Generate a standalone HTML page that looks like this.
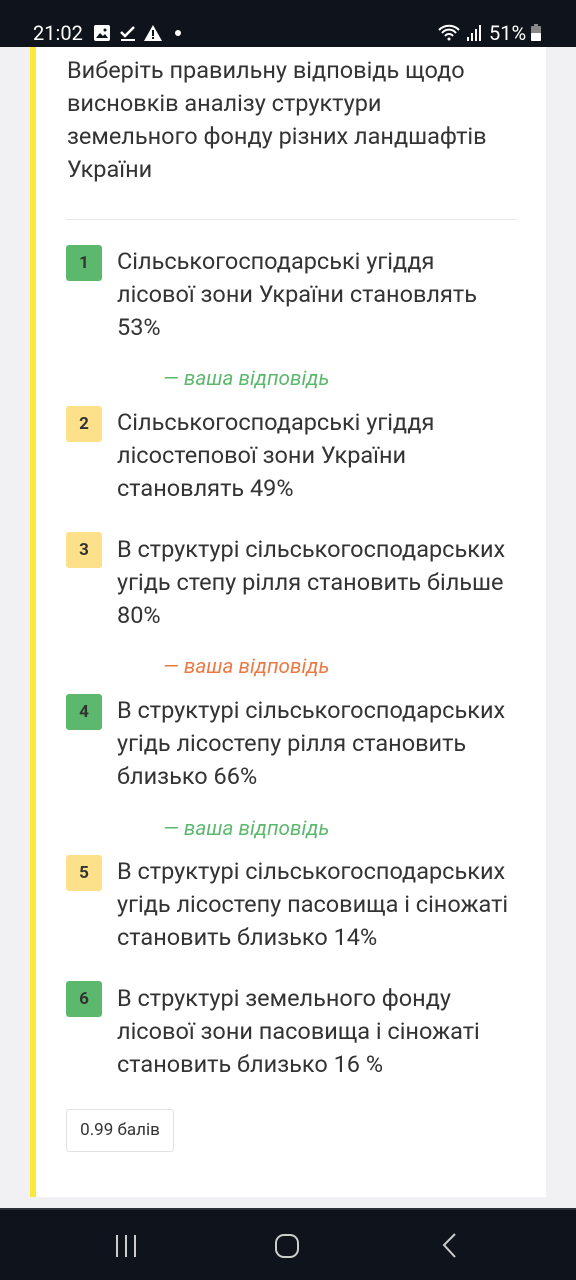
<!DOCTYPE html>
<html><head><meta charset="utf-8"><style>
*{margin:0;padding:0;box-sizing:border-box}
body{width:576px;height:1280px;background:#f1f1f3;font-family:"Roboto","Liberation Sans","DejaVu Sans",sans-serif;position:relative;overflow:hidden;color:#333}
.sb{position:absolute;left:0;top:0;width:576px;height:47px;background:#0f141c;color:#fff;font-size:20px}
.card{position:absolute;left:30px;top:47px;width:516px;height:1150px;background:#fff;border-left:6px solid #fbe83a}
.q{position:absolute;left:67px;top:54px;font-size:23.5px;line-height:33px;color:#333;white-space:nowrap}
.hr{position:absolute;left:66px;top:219px;width:451px;height:1px;background:#e8e8e8}
.b{position:absolute;left:66px;width:36px;height:36px;border-radius:3px;font-size:17px;font-weight:bold;color:#333;text-align:center;line-height:36px}
.g{background:#5cb86c}.y{background:#fde08a}
.t{position:absolute;left:117px;font-size:23.5px;line-height:33px;color:#333;white-space:nowrap}
.a{position:absolute;left:163px;font-size:20.7px;font-style:italic}
.nav{position:absolute;left:0;top:1208px;width:576px;height:72px;background:#0f141c;border-top:2px solid #2a2f36}
</style></head><body>
<div class="sb">
<span style="position:absolute;left:33px;top:21px">21:02</span>
<svg style="position:absolute;left:93px;top:24px" width="18" height="18" viewBox="0 0 18 18"><rect x="1" y="1" width="16" height="16" rx="2" fill="#fff"/><path d="M3 14l4-5 3 3 2-2 3 4z" fill="#0f141c"/><circle cx="12" cy="6" r="1.5" fill="#0f141c"/></svg>
<svg style="position:absolute;left:119px;top:24px" width="18" height="18" viewBox="0 0 18 18"><path d="M2 8l4 4 9-9" stroke="#fff" stroke-width="2.5" fill="none"/><rect x="2" y="15" width="14" height="2" fill="#fff"/></svg>
<svg style="position:absolute;left:143px;top:24px" width="20" height="18" viewBox="0 0 20 18"><path d="M10 1L19 17H1z" fill="#fff"/><rect x="9" y="6" width="2" height="6" fill="#0f141c"/><rect x="9" y="13" width="2" height="2" fill="#0f141c"/></svg>
<span style="position:absolute;left:175px;top:30px;width:6px;height:6px;border-radius:3px;background:#fff"></span>
<svg style="position:absolute;left:437px;top:23px" width="48" height="20" viewBox="0 0 48 20"><path d="M2 7a14 14 0 0 1 20 0M5 10a9 9 0 0 1 14 0M8 13a5 5 0 0 1 8 0" stroke="#fff" stroke-width="2" fill="none"/><circle cx="12" cy="16" r="1.5" fill="#fff"/><rect x="30" y="14" width="2" height="4" fill="#fff"/><rect x="34" y="10" width="2" height="8" fill="#fff"/><rect x="38" y="6" width="2" height="12" fill="#fff"/><rect x="42" y="2" width="2" height="16" fill="#fff"/></svg>
<span style="position:absolute;left:489px;top:21px">51%</span>
<svg style="position:absolute;left:530px;top:24px" width="12" height="18" viewBox="0 0 12 18"><rect x="4" y="0" width="4" height="2" fill="#888"/><rect x="1" y="2" width="10" height="15" rx="1" fill="#888"/><rect x="1" y="9" width="10" height="8" rx="1" fill="#fff"/></svg>
</div>
<div class="card"></div>
<div class="q">Виберіть правильну відповідь щодо<br>висновків аналізу структури<br>земельного фонду різних ландшафтів<br>України</div>
<div class="hr"></div>

<div class="b g" style="top:245px">1</div>
<div class="t" style="top:245px">Сільськогосподарські угіддя<br>лісової зони України становлять<br>53%</div>
<div class="a" style="top:367px;color:#5cb86c">— ваша відповідь</div>

<div class="b y" style="top:406px">2</div>
<div class="t" style="top:406px">Сільськогосподарські угіддя<br>лісостепової зони України<br>становлять 49%</div>

<div class="b y" style="top:532px">3</div>
<div class="t" style="top:533px">В структурі сільськогосподарських<br>угідь степу рілля становить більше<br>80%</div>
<div class="a" style="top:655px;color:#ea7a45">— ваша відповідь</div>

<div class="b g" style="top:694px">4</div>
<div class="t" style="top:694px">В структурі сільськогосподарських<br>угідь лісостепу рілля становить<br>близько 66%</div>
<div class="a" style="top:817px;color:#5cb86c">— ваша відповідь</div>

<div class="b y" style="top:855px">5</div>
<div class="t" style="top:855px">В структурі сільськогосподарських<br>угідь лісостепу пасовища і сіножаті<br>становить близько 14%</div>

<div class="b g" style="top:981px">6</div>
<div class="t" style="top:982px">В структурі земельного фонду<br>лісової зони пасовища і сіножаті<br>становить близько 16 %</div>

<div style="position:absolute;left:66px;top:1109px;width:108px;height:43px;border:1px solid #e2e2e2;border-radius:3px;font-size:17px;line-height:41px;text-align:center;color:#333">0.99 балів</div>

<div class="nav">
<svg style="position:absolute;left:114px;top:24px" width="26" height="24" viewBox="0 0 26 24"><path d="M3 1v22M12 1v22M21 1v22" stroke="#ccc" stroke-width="2"/></svg>
<svg style="position:absolute;left:274px;top:22px" width="28" height="28" viewBox="0 0 28 28"><rect x="2" y="3" width="22" height="22" rx="8" stroke="#ccc" stroke-width="2" fill="none"/></svg>
<svg style="position:absolute;left:440px;top:22px" width="20" height="28" viewBox="0 0 20 28"><path d="M15 2L4 13l11 12" stroke="#ccc" stroke-width="2" fill="none"/></svg>
</div>
</body></html>
